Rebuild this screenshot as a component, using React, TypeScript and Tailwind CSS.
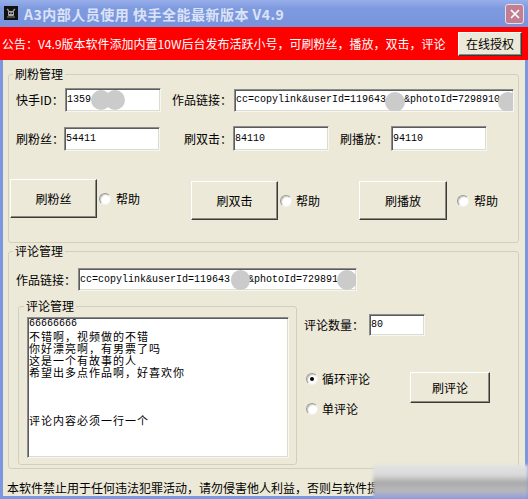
// A3 快手全能 - main window
import React from 'react'
import { X } from 'lucide-react'

const sunken =
  'bg-white border border-t-[#8c8c8c] border-l-[#8c8c8c] border-b-[#f6f6f2] border-r-[#f6f6f2] shadow-[inset_1px_1px_0_#5c5c5c,inset_-1px_-1px_0_#dedbcf]'
const raised =
  'bg-[#ece9d8] border border-t-white border-l-white border-b-[#3a3a3a] border-r-[#3a3a3a] shadow-[inset_-1px_-1px_0_#8d8b80]'
const mono = "font-['Liberation_Mono',monospace] text-[10px]"
const group = 'border border-[#d0d0bf] rounded-[3px]'

function Blob({ pos }: { pos: string }) {
  return <span className={`absolute rounded-full bg-[#cbcbcb] blur-[0.5px] ${pos}`} />
}

function Field({
  size,
  children,
  blobs = [],
}: {
  size: string
  children?: React.ReactNode
  blobs?: string[]
}) {
  return (
    <div className={`relative overflow-hidden flex items-center pl-[1px] ${sunken} ${size}`}>
      <span className={`${mono} whitespace-pre leading-[12px]`}>{children}</span>
      {blobs.map((b) => (
        <Blob key={b} pos={b} />
      ))}
    </div>
  )
}

function Radio({ checked = false }: { checked?: boolean }) {
  return (
    <span className="w-[12px] h-[12px] rounded-full bg-white border border-t-[#9c9a92] border-l-[#9c9a92] border-b-[#f2f2ee] border-r-[#f2f2ee] shadow-[inset_1px_1px_1px_#c9c7bd] flex items-center justify-center">
      {checked && <span className="w-[4px] h-[4px] rounded-full bg-black" />}
    </span>
  )
}

function Btn({ size, children }: { size: string; children: React.ReactNode }) {
  return <div className={`flex items-center justify-center ${raised} ${size}`}>{children}</div>
}

function AppIcon() {
  return (
    <svg width="14" height="14" viewBox="0 0 14 14">
      <rect width="14" height="14" fill="#111" />
      <path d="M3 3 L5 5 M11 3 L9 5" stroke="#9a9a9a" strokeWidth="1.4" />
      <rect x="4" y="5" width="6" height="5" rx="1" fill="#a8a8a8" />
      <rect x="5" y="6.5" width="1.5" height="1.5" fill="#111" />
      <rect x="7.5" y="6.5" width="1.5" height="1.5" fill="#111" />
      <path d="M3 11 H11" stroke="#8a8a8a" strokeWidth="1" />
    </svg>
  )
}

const comments = [
  '不错啊，视频做的不错',
  '你好漂亮啊，有男票了吗',
  '这是一个有故事的人',
  '希望出多点作品啊，好喜欢你',
  ' ',
  ' ',
  ' ',
  '评论内容必须一行一个',
]

export default function App() {
  return (
    <div className="relative w-[528px] h-[499px] overflow-hidden bg-[#ece9d8] flex flex-col font-['Noto_Sans_CJK_SC',sans-serif] text-[12px] leading-[14px] text-black">
      {/* Title bar */}
      <div className="h-[27px] shrink-0 flex items-start bg-[linear-gradient(180deg,#98aee9_0%,#7f9be0_30%,#7893dc_100%)]">
        <div className="ml-[4px] mt-[6px]">
          <AppIcon />
        </div>
        <span className="ml-[6px] mt-[6px] text-[14px] leading-[16px] font-bold tracking-[0.5px] text-[#dbe3f7] whitespace-pre">
          A3内部人员使用 快手全能最新版本 V4.9
        </span>
        <div className="ml-auto mr-[4px] mt-[4px] w-[19px] h-[20px] rounded-[3px] bg-[#c27e93] border border-[#ecdde4] flex items-center justify-center">
          <X size={14} strokeWidth={3} color="#ffffff" />
        </div>
      </div>

      {/* Notice */}
      <div className="h-[33px] shrink-0 bg-[#ff0000] flex items-center">
        <span className="pl-[2px] text-white whitespace-nowrap">
          公告：V4.9版本软件添加内置10W后台发布活跃小号，可刷粉丝，播放，双击，评论
        </span>
        <Btn size="ml-auto mr-[6px] w-[64px] h-[24px]">在线授权</Btn>
      </div>

      {/* Body */}
      <div className="flex-1 flex flex-col border-x-[3px] border-b-[3px] border-[#7b97df]">
        {/* 刷粉管理 */}
        <fieldset className={`ml-[5px] mt-[7px] w-[511px] pb-[22px] ${group}`}>
          <legend className="ml-[4px] px-[2px] leading-[14px]">刷粉管理</legend>
          <div className="mt-[7px] h-[24px] flex items-center">
            <span className="ml-[7px] w-[49px]">快手ID：</span>
            <Field size="w-[96px] h-[24px]" blobs={['left-[25px] top-[1px] w-[20px] h-[20px]', 'left-[39px] top-[1px] w-[20px] h-[20px]']}>
              1359
            </Field>
            <span className="ml-[11px] w-[62px]">作品链接：</span>
            <Field size="w-[280px] h-[23px]" blobs={['left-[150px] top-[2px] w-[20px] h-[20px]', 'left-[263px] top-[2px] w-[20px] h-[20px]']}>
              {'cc=copylink&userId=119643   &photoId=7298910'}
            </Field>
          </div>
          <div className="mt-[14px] h-[25px] flex items-center">
            <span className="ml-[7px] w-[48px]">刷粉丝：</span>
            <Field size="w-[96px] h-[24px]">54411</Field>
            <span className="ml-[24px] w-[49px]">刷双击：</span>
            <Field size="w-[96px] h-[25px]">84110</Field>
            <span className="ml-[11px] w-[51px]">刷播放：</span>
            <Field size="w-[96px] h-[25px]">94110</Field>
          </div>
          <div className="mt-[28px] h-[41px] flex items-start">
            <div className="ml-[1px] flex items-center">
              <Btn size="w-[87px] h-[39px]">刷粉丝</Btn>
              <span className="ml-[2px]"><Radio /></span>
              <span className="ml-[5px]">帮助</span>
            </div>
            <div className="ml-[51px] mt-[2px] flex items-center">
              <Btn size="w-[87px] h-[39px]">刷双击</Btn>
              <span className="ml-[2px]"><Radio /></span>
              <span className="ml-[4px]">帮助</span>
            </div>
            <div className="ml-[39px] mt-[2px] flex items-center">
              <Btn size="w-[88px] h-[39px]">刷播放</Btn>
              <span className="ml-[10px]"><Radio /></span>
              <span className="ml-[5px]">帮助</span>
            </div>
          </div>
        </fieldset>

        {/* 评论管理 */}
        <fieldset className={`ml-[5px] mt-[1px] w-[511px] pb-[3px] ${group}`}>
          <legend className="ml-[4px] px-[2px] leading-[14px]">评论管理</legend>
          <div className="mt-[10px] h-[23px] flex items-center">
            <span className="ml-[7px] w-[62px]">作品链接：</span>
            <Field size="w-[279px] h-[23px]" blobs={['left-[152px] top-[1px] w-[19px] h-[20px]', 'left-[258px] top-[1px] w-[20px] h-[20px]']}>
              {'cc=copylink&userId=119643   &photoId=729891'}
            </Field>
          </div>
          <div className="mt-[8px] flex items-start">
            <fieldset className={`ml-[9px] w-[279px] pb-[6px] ${group}`}>
              <legend className="ml-[5px] px-[2px] leading-[14px]">评论管理</legend>
              <div className={`mt-[4px] ml-[8px] w-[262px] h-[141px] pl-[1px] leading-[12px] ${sunken}`}>
                <div className={`${mono} h-[12px] leading-[12px]`}>66666666</div>
                {comments.map((c, i) => (
                  <div key={i} className="h-[12px] text-[11px] leading-[12px] tracking-[1px] whitespace-pre">
                    {c}
                  </div>
                ))}
              </div>
            </fieldset>
            <div className="ml-[7px] flex flex-col">
              <div className="mt-[15px] h-[22px] flex items-center">
                <span className="w-[65px]">评论数量：</span>
                <Field size="w-[56px] h-[22px]">80</Field>
              </div>
              <div className="mt-[36px] flex items-start">
                <div className="ml-[2px] w-[104px] flex flex-col">
                  <div className="h-[14px] flex items-center">
                    <Radio checked />
                    <span className="ml-[4px]">循环评论</span>
                  </div>
                  <div className="mt-[16px] h-[14px] flex items-center">
                    <Radio />
                    <span className="ml-[4px]">单评论</span>
                  </div>
                </div>
                <Btn size="w-[80px] h-[31px]">刷评论</Btn>
              </div>
            </div>
          </div>
        </fieldset>

        {/* Status */}
        <div className="mt-[12px] pl-[4px] whitespace-nowrap overflow-hidden">
          本软件禁止用于任何违法犯罪活动，请勿侵害他人利益，否则与软件提供者无关
        </div>
      </div>

      {/* blurred corner of the capture */}
      <div className="absolute left-[373px] top-[465px] w-[155px] h-[34px] blur-[1.5px] bg-[linear-gradient(180deg,#e2e2e2_0%,#d9d9d9_30%,#a9a9a9_52%,#b9b9b9_74%,#8f9ddd_100%)]" />
    </div>
  )
}
